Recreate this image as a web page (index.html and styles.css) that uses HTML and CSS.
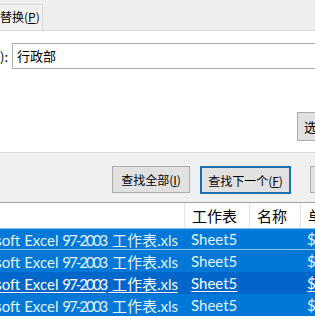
FILE: index.html
```html
<!DOCTYPE html>
<html lang="zh-CN">
<head>
    <meta charset="UTF-8">
    <title>查找和替换</title>
    <link rel="stylesheet" href="styles.css">
</head>
<body>
    <div class="tabs">
        <div class="tab">替换(<u>P</u>)</div>
    </div>

    <div class="panel">
        <div class="find-row">
            <div class="find-label"><span>):</span></div>
            <div class="find-input">行政部</div>
        </div>
        <div class="options-row">
            <button class="btn btn-options">选</button>
        </div>
    </div>

    <div class="actions">
        <button class="btn btn-all">查找全部(<u>I</u>)</button>
        <button class="btn btn-next">查找下一个(<u>F</u>)</button>
        <button class="btn btn-close"></button>
    </div>

    <div class="results">
        <div class="row head">
            <div class="cell book"></div>
            <div class="cell">工作表</div>
            <div class="cell">名称</div>
            <div class="cell">单</div>
        </div>
        <div class="row sel focus">
            <div class="cell book"><span>soft Excel <span class="num">97-2003</span> 工作表.xls</span></div>
            <div class="cell">Sheet5</div>
            <div class="cell"></div>
            <div class="cell">$</div>
        </div>
        <div class="row sel">
            <div class="cell book"><span>soft Excel <span class="num">97-2003</span> 工作表.xls</span></div>
            <div class="cell">Sheet5</div>
            <div class="cell"></div>
            <div class="cell">$</div>
        </div>
        <div class="row sel hover">
            <div class="cell book"><span>soft Excel <span class="num">97-2003</span> 工作表.xls</span></div>
            <div class="cell">Sheet5</div>
            <div class="cell"></div>
            <div class="cell">$</div>
        </div>
        <div class="row sel">
            <div class="cell book"><span>soft Excel <span class="num">97-2003</span> 工作表.xls</span></div>
            <div class="cell">Sheet5</div>
            <div class="cell"></div>
            <div class="cell">$</div>
        </div>
    </div>
</body>
</html>
```

FILE: styles.css
```css
body { margin: 0; width: 315px; height: 317px; overflow: hidden; background: #fff; font-family: "Noto Sans CJK SC", sans-serif; color: #000; }
u { text-underline-offset: 1px; }

.tabs { height: 30px; background: #eeeeee; border-bottom: 1px solid #d9d9d9; display: flex; align-items: flex-end; }
.tab { width: 42px; height: 25px; border-top: 1px solid #d9d9d9; border-right: 1px solid #d9d9d9; background: #f2f2f2; font-size: 12px; line-height: 24px; white-space: nowrap; }

.panel { height: 121px; padding-top: 12px; box-sizing: border-box; }
.find-row { display: flex; align-items: center; gap: 4px; }
.find-label { width: 12px; font-size: 13px; text-align: right; white-space: nowrap; }
.find-input { flex: none; width: 400px; height: 24px; border: 1px solid #adadad; padding-left: 4px; font-size: 13px; line-height: 24px; }
.options-row { margin-top: 43px; padding-left: 297px; display: flex; }

.btn { flex: none; height: 27px; background: #e1e1e1; border: 1px solid #adadad; font-family: "Noto Sans CJK SC", sans-serif; font-size: 12px; padding: 0; color: #000; white-space: nowrap; text-align: center; }
.btn-options { height: 29px; width: 40px; text-align: left; padding-left: 6px; font-size: 13px; }

.actions { height: 51px; background: #f0f0f0; border-top: 1px solid #dcdcdc; border-bottom: 1px solid #a0a0a0; display: flex; align-items: flex-start; padding: 13px 0 0 112px; gap: 10px; box-sizing: border-box; }
.btn-all { width: 78px; }
.btn-next { width: 91px; height: 28px; border: 2px solid #1a6eb0; }
.btn-close { width: 40px; margin-left: 9px; }

.results { font-size: 15px; font-family: "Lato", "Noto Sans CJK SC", sans-serif; }
.row { display: grid; grid-template-columns: 185px 65px 51px 100px; height: 22px; }
.row.head { height: 25px; background: #fff; }
.cell { padding-left: 6px; white-space: nowrap; overflow: hidden; display: flex; align-items: center; }
.head .cell { border-right: 1px solid #e5e5e5; padding-left: 7px; font-family: "Noto Sans CJK SC", sans-serif; }
.cell.book { padding: 0 7px 0 0; justify-content: flex-end; }
.num { letter-spacing: -2px; margin-right: 2px; }
.sel { background: #0078d7; color: #e2f2ff; }
.focus { box-shadow: inset 0 1px 0 #8ec6f0, inset 0 -1px 0 #8ec6f0; }
.hover { background: #0066c9; color: #fff; text-decoration: underline; text-underline-offset: 2px; }
```
